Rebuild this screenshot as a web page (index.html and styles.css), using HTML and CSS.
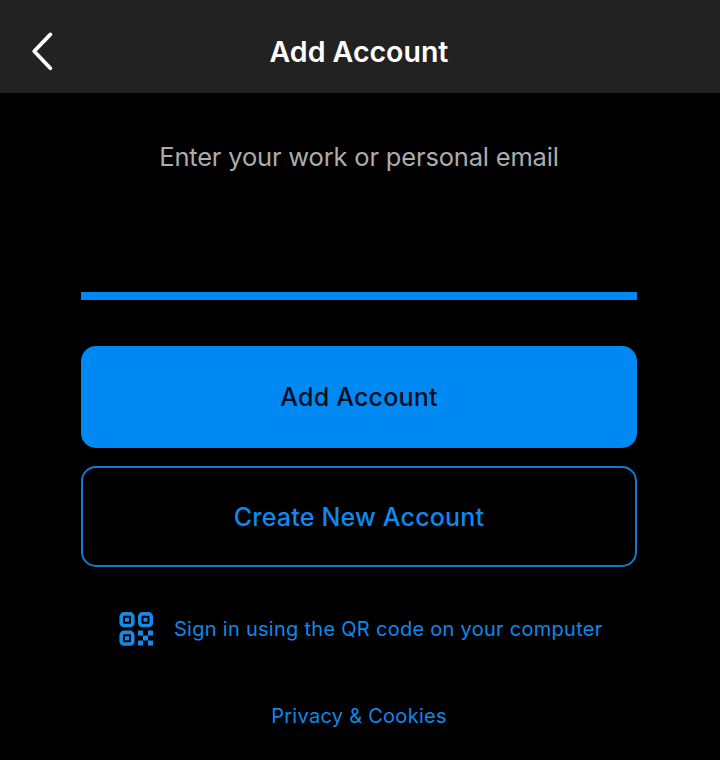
FILE: index.html
```html
<!DOCTYPE html>
<html lang="en">
<head>
<meta charset="utf-8">
<meta name="viewport" content="width=device-width">
<title>Add Account</title>
<link rel="stylesheet" href="styles.css">
</head>
<body>
<header class="navbar">
  <button class="back" aria-label="Back">
    <svg width="24" height="42" viewBox="0 0 24 42"><path d="M20.4 3.4 4.2 20.3 20.4 37.2" fill="none" stroke="currentColor" stroke-width="3.8" stroke-linecap="round" stroke-linejoin="round"/></svg>
  </button>
  <h1 class="title">Add Account</h1>
</header>
<main class="content">
  <label class="prompt" for="email">Enter your work or personal email</label>
  <input class="email" id="email" type="email">
  <button class="button button-primary">Add Account</button>
  <button class="button button-outline">Create New Account</button>
  <a class="qr-link">
    <svg class="qr-icon" width="36" height="36" viewBox="0 0 36 36">
      <g fill="none" stroke="currentColor" stroke-width="3.6">
        <rect x="3.2" y="2.9" width="11.6" height="11.6" rx="2.8"/>
        <rect x="21.7" y="2.9" width="11.6" height="11.6" rx="2.8"/>
        <rect x="3.2" y="21.4" width="11.6" height="11.6" rx="2.8"/>
      </g>
      <path fill="currentColor" d="M7 6.7h4v4H7zM25.5 6.7h4v4h-4zM7 25.2h4v4H7zM20 19.6h5v5h-5zM30 19.6h5v5h-5zM25 24.6h5v5h-5zM20 29.6h5v5h-5zM30 29.6h5v5h-5z"/>
    </svg>
    <span>Sign in using the QR code on your computer</span>
  </a>
  <a class="privacy">Privacy &amp; Cookies</a>
</main>
</body>
</html>
```
FILE: styles.css
```css
* { box-sizing: border-box; }
body {
  margin: 0;
  min-height: 760px;
  background: #000;
  color: #fff;
  font-family: Inter, "Liberation Sans", sans-serif;
}
button { font: inherit; cursor: pointer; }
.navbar {
  display: grid;
  grid-template-columns: 80px 1fr 82px;
  align-items: center;
  height: 93px;
  padding-top: 10px;
  background: #222;
}
.back {
  display: flex;
  width: 80px;
  padding: 0 0 0 30px;
  border: 0;
  background: none;
  color: #fff;
}
.title {
  margin: 0;
  text-align: center;
  font-size: 28.5px;
  line-height: 36px;
  font-weight: 600;
}
.content {
  display: flex;
  flex-direction: column;
  width: 556px;
  margin-left: 81px;
  padding-top: 48px;
}
.prompt {
  text-align: center;
  color: #acacac;
  font-size: 25.5px;
  line-height: 32px;
  letter-spacing: -0.18px;
}
.email {
  height: 119px;
  margin: 8px 0 46px;
  padding: 50px 0 8px;
  border: 0;
  border-bottom: 8px solid #0088f3;
  outline: 0;
  background: transparent;
  color: #fff;
  font: 26px Inter, sans-serif;
}
.button {
  height: 102px;
  border: 0;
  border-radius: 15px;
  font-size: 25px;
  font-weight: 500;
  letter-spacing: 0.2px;
}
.button-primary {
  margin-bottom: 18px;
  background: #0088f3;
  color: #000d1c;
}
.button-outline {
  height: 101px;
  border: 2px solid #1478cc;
  background: transparent;
  color: #0b8af2;
}
.qr-link {
  display: flex;
  align-items: center;
  gap: 20px;
  height: 36px;
  margin: 44px 0 0 37px;
  color: #1088ea;
  font-size: 20px;
  letter-spacing: 0.28px;
  white-space: nowrap;
}
.qr-icon { color: #168aea; flex: none; }
.privacy {
  margin-top: 57px;
  text-align: center;
  color: #1088ea;
  font-size: 20px;
  line-height: 24px;
  letter-spacing: 0.28px;
}
```
